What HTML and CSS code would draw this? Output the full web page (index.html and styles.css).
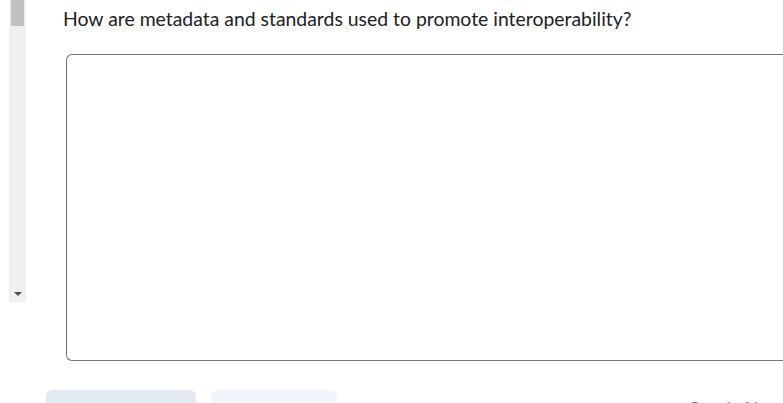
FILE: index.html
```html
<!DOCTYPE html>
<html>
<head>
<meta charset="utf-8">
<link rel="stylesheet" href="styles.css">
</head>
<body>
<div class="page">
  <div class="scrollbar">
    <div class="thumb"></div>
    <div class="track"></div>
    <div class="arrow"></div>
  </div>
  <div class="content">
    <p class="question">How are metadata and standards used to promote interoperability?</p>
    <div class="answer"></div>
    <div class="footer">
      <div class="btn btn-primary"></div>
      <div class="btn btn-secondary"></div>
      <div class="pager">Page 1 of 1</div>
    </div>
  </div>
</div>
</body>
</html>
```
FILE: styles.css
```css
html, body {
  margin: 0;
  padding: 0;
  background: #ffffff;
  overflow: hidden;
}
.page {
  display: flex;
  width: 783px;
  height: 403px;
  overflow: hidden;
  font-family: Lato, "Open Sans", sans-serif;
}
.scrollbar {
  margin-left: 9px;
  width: 17px;
  height: 302px;
  background: #f0f0f0;
  display: flex;
  flex-direction: column;
  align-items: center;
  flex-shrink: 0;
}
.thumb {
  width: 13px;
  height: 26px;
  background: #c1c1c1;
}
.track {
  flex: 1;
}
.arrow {
  width: 0;
  height: 0;
  border-left: 4px solid transparent;
  border-right: 4px solid transparent;
  border-top: 4px solid #505050;
  margin-bottom: 6px;
}
.content {
  flex: 1;
  display: flex;
  flex-direction: column;
  padding-left: 20px;
  min-width: 0;
}
.question {
  margin: 7px 0 0 17px;
  font-size: 19.4px;
  line-height: 24px;
  color: #202122;
  white-space: nowrap;
}
.answer {
  margin: 23px -20px 0 20px;
  height: 305px;
  border: 1px solid #6e7477;
  border-right: none;
  border-radius: 6px 0 0 6px;
  flex-shrink: 0;
}
.footer {
  display: flex;
  align-items: flex-start;
  margin-top: 29px;
  gap: 15px;
}
.btn {
  height: 40px;
  border-radius: 6px;
  flex-shrink: 0;
}
.btn-primary {
  width: 150px;
  background: #e3e9f1;
}
.btn-secondary {
  width: 126px;
  background: #f1f5fb;
}
.pager {
  margin-left: auto;
  margin-top: 8px;
  font-size: 14px;
  color: #6e7477;
  white-space: nowrap;
  width: 92px;
}
```
